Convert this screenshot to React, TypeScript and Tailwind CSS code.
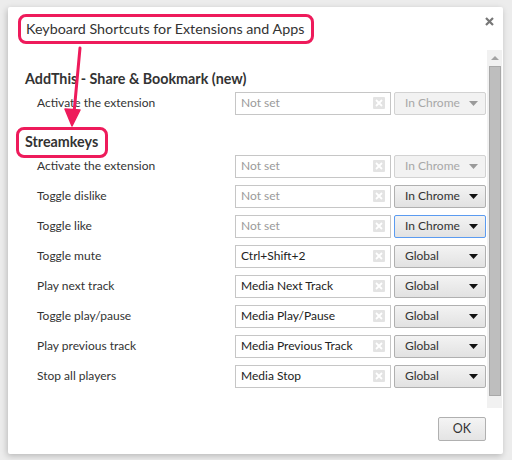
import React from "react";

const PINK = "#ee1b5b";

type Row = {
  label: string;
  value: string;
  scope: string;
  disabled?: boolean;
  focused?: boolean;
};

const addThisRows: Row[] = [
  { label: "Activate the extension", value: "", scope: "In Chrome", disabled: true },
];

const streamkeysRows: Row[] = [
  { label: "Activate the extension", value: "", scope: "In Chrome", disabled: true },
  { label: "Toggle dislike", value: "", scope: "In Chrome" },
  { label: "Toggle like", value: "", scope: "In Chrome", focused: true },
  { label: "Toggle mute", value: "Ctrl+Shift+2", scope: "Global" },
  { label: "Play next track", value: "Media Next Track", scope: "Global" },
  { label: "Toggle play/pause", value: "Media Play/Pause", scope: "Global" },
  { label: "Play previous track", value: "Media Previous Track", scope: "Global" },
  { label: "Stop all players", value: "Media Stop", scope: "Global" },
];

function ClearIcon() {
  return (
    <span className="flex h-[12px] w-[12px] shrink-0 items-center justify-center rounded-[1px] bg-[#e3e3e3]">
      <svg width="8" height="8" viewBox="0 0 8 8">
        <path d="M1 1L7 7M7 1L1 7" stroke="#ffffff" strokeWidth="1.8" />
      </svg>
    </span>
  );
}

function ShortcutRow({ row }: { row: Row }) {
  return (
    <div className="flex h-[30px] items-center">
      <div className="w-[227px] shrink-0 pl-[29px] text-[12px] text-[#333]">{row.label}</div>
      <div className="flex h-[23px] w-[156px] shrink-0 items-center justify-between border border-[#c6c6c6] bg-white pl-[5px] pr-[5px]">
        <span className={row.value ? "text-[12px] text-[#222]" : "text-[12px] text-[#9a9a9a]"}>
          {row.value || "Not set"}
        </span>
        <ClearIcon />
      </div>
      <div
        className={
          "ml-[3px] flex h-[23px] w-[92px] shrink-0 items-center justify-between rounded-[2px] border pl-[10px] pr-[7px] " +
          (row.disabled
            ? "border-[#d2d2d2] bg-[#f2f2f2] text-[#a8a8a8]"
            : row.focused
            ? "border-[#5b9bf0] bg-gradient-to-b from-[#f3f3f3] to-[#e2e2e2] text-[#333]"
            : "border-[#b0b0b0] bg-gradient-to-b from-[#f3f3f3] to-[#e2e2e2] text-[#333]")
        }
      >
        <span className="text-[12px]">{row.scope}</span>
        <svg width="9" height="5" viewBox="0 0 9 5">
          <path d="M0 0H9L4.5 5Z" fill={row.disabled ? "#9a9a9a" : "#111"} />
        </svg>
      </div>
    </div>
  );
}

export default function App() {
  return (
    <div
      className="h-[460px] w-[512px] overflow-hidden bg-[#ececec] pl-[8px] pt-[7px]"
      style={{ fontFamily: 'Lato, "Open Sans", sans-serif' }}
    >
      <div className="relative flex h-[447px] w-[495px] flex-col rounded-[2px] bg-white shadow-[-1px_2px_6px_rgba(0,0,0,0.22)]">
        {/* header */}
        <div className="flex h-[43px] items-start justify-between">
          <div className="ml-[10px] mt-[7px] flex h-[30px] items-center rounded-[8px] border-[3px] border-[#ee1b5b] pl-[5px] pr-[7px] text-[14.3px] text-[#333]">
            Keyboard Shortcuts for Extensions and Apps
          </div>
          <svg className="mr-[9px] mt-[10px]" width="9" height="9" viewBox="0 0 9 9">
            <path d="M1 1L8 8M8 1L1 8" stroke="#777" strokeWidth="2.2" />
          </svg>
        </div>

        {/* scrolling list */}
        <div className="flex h-[358px]">
          <div className="flex-1 pt-[20px]">
            <div className="flex h-[18px] items-center pl-[17px] text-[14.3px] font-bold text-[#333]">
              AddThis - Share &amp; Bookmark (new)
            </div>
            {addThisRows.map((r, i) => (
              <ShortcutRow key={i} row={r} />
            ))}
            <div className="mt-[15px] flex h-[18px] items-center pl-[8px]">
              <span className="flex h-[31px] items-center rounded-[8px] border-[3px] border-[#ee1b5b] pl-[6px] pr-[7px] text-[14.3px] font-bold text-[#333]">
                Streamkeys
              </span>
            </div>
            {streamkeysRows.map((r, i) => (
              <ShortcutRow key={i} row={r} />
            ))}
          </div>
          <div className="mr-[1px] flex w-[15px] shrink-0 flex-col items-center bg-[#f1f1f1]">
            <svg className="mt-[6px]" width="8" height="4" viewBox="0 0 8 4">
              <path d="M0 4H8L4 0Z" fill="#a3a3a3" />
            </svg>
            <div className="mt-[6px] h-[330px] w-[12px] border border-[#a8a8a8] bg-[#bebebe]" />
          </div>
        </div>

        {/* footer */}
        <div className="flex flex-1 items-start justify-end pr-[17px] pt-[9px]">
          <button className="h-[24px] w-[48px] rounded-[2px] border border-[#b0b0b0] bg-gradient-to-b from-[#f4f4f4] to-[#e4e4e4] text-[12.5px] text-[#333]">
            OK
          </button>
        </div>

        {/* annotation arrow from the title to the Streamkeys heading */}
        <svg className="pointer-events-none absolute left-0 top-0" width="120" height="130" viewBox="0 0 120 130">
          <path d="M72 41L66 106" stroke={PINK} strokeWidth="3" strokeLinecap="round" />
          <path d="M57 102L64 119L72 103Z" fill={PINK} stroke={PINK} strokeWidth="1.5" strokeLinejoin="round" />
        </svg>
      </div>
    </div>
  );
}
